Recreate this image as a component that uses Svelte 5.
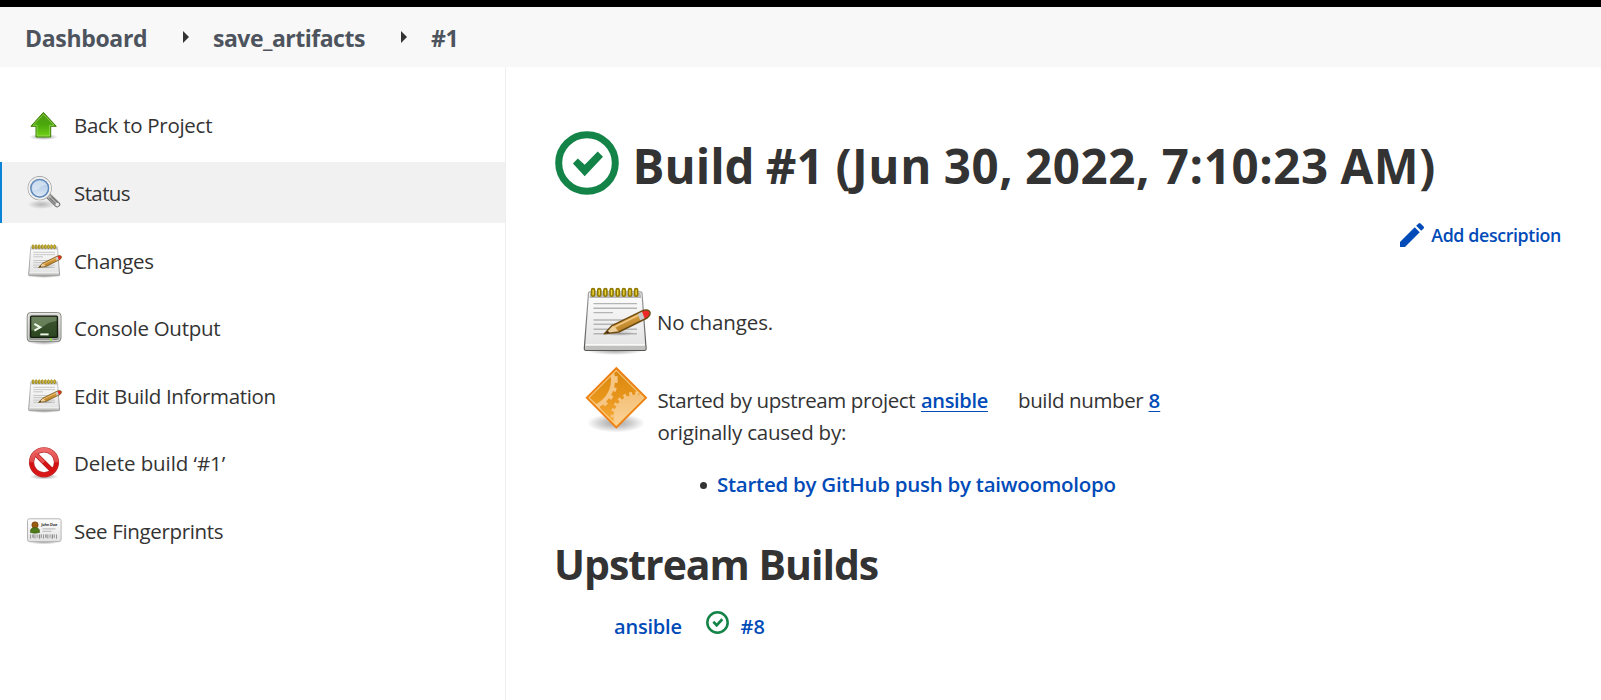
<script>
  const tasks = [
    { label: 'Back to Project', icon: 'up', tracking: -0.28 },
    { label: 'Status', icon: 'search', tracking: -0.6 },
    { label: 'Changes', icon: 'notepad', tracking: -0.3 },
    { label: 'Console Output', icon: 'terminal', tracking: -0.28 },
    { label: 'Edit Build Information', icon: 'notepad', tracking: -0.35 },
    { label: 'Delete build ‘#1’', icon: 'stop', tracking: -0.08 },
    { label: 'See Fingerprints', icon: 'card', tracking: -0.34 }
  ];
  const current = 'Status';
  const rings = [0, 1, 2, 3, 4, 5, 6, 7];
  const bars = [0, 1, 2, 3, 4, 5, 6, 7, 8, 9, 10, 11, 12];
</script>

<svg class="defs" width="0" height="0" aria-hidden="true">
  <defs>
    <radialGradient id="shade"><stop offset="0" stop-color="#000" stop-opacity=".36" /><stop offset=".5" stop-color="#000" stop-opacity=".2" /><stop offset="1" stop-color="#000" stop-opacity="0" /></radialGradient>
    <linearGradient id="green" x1="0" y1="0" x2="0" y2="1"><stop offset="0" stop-color="#4f9a12" /><stop offset=".5" stop-color="#4aa80c" /><stop offset="1" stop-color="#73d216" /></linearGradient>
    <linearGradient id="glass" x1="0" y1="0" x2="0" y2="1"><stop offset="0" stop-color="#a9c4e4" /><stop offset=".6" stop-color="#c6d9ee" /><stop offset="1" stop-color="#e6f0fa" /></linearGradient>
    <linearGradient id="paper" x1="0" y1="0" x2="0" y2="1"><stop offset="0" stop-color="#fdfdfd" /><stop offset="1" stop-color="#e2e2e2" /></linearGradient>
    <linearGradient id="edge" x1="0" y1="0" x2="0" y2="1"><stop offset="0" stop-color="#a0a0a0" /><stop offset="1" stop-color="#555753" /></linearGradient>
    <linearGradient id="wood" x1="0" y1="0" x2=".4" y2="1"><stop offset="0" stop-color="#eab65c" /><stop offset=".5" stop-color="#d39a3c" /><stop offset="1" stop-color="#b07a22" /></linearGradient>
    <linearGradient id="case" x1="0" y1="0" x2="0" y2="1"><stop offset="0" stop-color="#dcdcd8" /><stop offset="1" stop-color="#93958f" /></linearGradient>
    <linearGradient id="screen" x1="0" y1="0" x2="0" y2="1"><stop offset="0" stop-color="#3f5633" /><stop offset="1" stop-color="#2c4720" /></linearGradient>
    <linearGradient id="red" x1="0" y1="0" x2="0" y2="1"><stop offset="0" stop-color="#ee6b6b" /><stop offset=".48" stop-color="#e24444" /><stop offset=".52" stop-color="#d01010" /><stop offset="1" stop-color="#dc1717" /></linearGradient>
    <linearGradient id="amber" x1="0" y1="0" x2="0" y2="1"><stop offset="0" stop-color="#d9860c" /><stop offset=".5" stop-color="#e8951c" /><stop offset="1" stop-color="#fbb03c" /></linearGradient>
    <linearGradient id="cream" x1="0" y1="0" x2="0" y2="1"><stop offset="0" stop-color="#f3c078" /><stop offset="1" stop-color="#ffdba4" /></linearGradient>
    <clipPath id="diamond"><path d="M30.3 4.6 57.6 31.7 30.3 59 3 31.7Z" /></clipPath>
  </defs>
</svg>

{#snippet notepad()}
  <ellipse cx="32" cy="63.5" rx="29" ry="4.5" fill="url(#shade)" />
  <path d="M7 4.8H57.4Q58.8 4.8 59 6.2L63.1 61.5Q63.2 63.4 61.4 63.4H3Q1.2 63.4 1.3 61.5L5.5 6.2Q5.6 4.8 7 4.8Z" fill="url(#paper)" stroke="url(#edge)" stroke-width="1.2" />
  <path d="M7 6H57.6L58.2 11H6.5Z" fill="#b9b9b9" />
  <path d="M2.4 58.6H62L62.3 62.4H2.1Z" fill="#c0c0be" />
  <path d="M2.6 57.8H61.8" stroke="#fff" stroke-width="1.2" />
  {#each rings as r}
    <rect x={8.6 + r * 6.15} y="1.6" width="3" height="7.6" rx="1.5" fill="#f0d840" stroke="#8f7902" stroke-width="1.6" />
  {/each}
  <path d="M10.5 16.6H54M10.5 21.3H54M10.5 25.6H30M10.5 33H44M10.5 37.3H34M10.5 42.3H54M10.5 46.7H54" stroke="#b4b4b4" stroke-width="1.4" />
  <ellipse cx="36" cy="46" rx="16" ry="3.5" fill="url(#shade)" opacity=".5" />
  <path d="M21.2 46.9 29 38.6 58.2 24.3Q63.6 21.9 66.4 24.2 68.6 27.3 64.1 31L35.8 45Z" fill="url(#wood)" />
  <path d="M21.2 46.9 29 38.6 32 40 35.8 45Z" fill="#edcf9b" />
  <path d="M30.5 40.5 56 27.8" stroke="#f3cd88" stroke-width="1.4" />
  <path d="M54.6 26.4 59 24.2 62 32 57.6 34.2Z" fill="#c9c9c9" />
  <path d="M59 24.2Q64 22.3 66 24.4 67.9 27.3 64 30.8L61.9 31.9Z" fill="#ef2929" />
  <path d="M21.2 46.9 24 43.8 27 45.6Z" fill="#222" />
  <path d="M21.2 46.9 29 38.6 58.2 24.3Q63.6 21.9 66.4 24.2 68.6 27.3 64.1 31L35.8 45Z" fill="none" stroke="#6d4b12" stroke-width="1.4" stroke-linejoin="round" />
{/snippet}

{#snippet taskIcon(name)}
  {#if name === 'notepad'}
    <svg class="pad-small" viewBox="0 0 70 68">{@render notepad()}</svg>
  {:else}
    <svg class="task-svg" viewBox="0 0 36 36">
      {#if name === 'up'}
        <ellipse cx="17.5" cy="30" rx="14.5" ry="3.2" fill="url(#shade)" />
        <path d="M17.4 5.4 30.3 19.3H24.7V30H10V19.3H4.9Z" fill="url(#green)" stroke="#3b7c08" stroke-linejoin="round" />
        <path d="M17.4 7.2 28 18.3H23.6V28.9H11.1V18.3H7.2Z" fill="none" stroke="#a3dd62" stroke-opacity=".65" />
      {:else if name === 'search'}
        <ellipse cx="15.5" cy="30.5" rx="14" ry="4.5" fill="url(#shade)" opacity=".65" />
        <path d="M22.3 21.8 31.2 30.3" stroke="#767676" stroke-width="6" stroke-linecap="round" />
        <path d="M22.3 21.8 31.2 30.3" stroke="#b5b5b2" stroke-width="4" stroke-linecap="round" />
        <path d="M23.5 24 30 30.4M25.5 22.5 32 28.8" stroke="#777" stroke-width="1.1" />
        <circle cx="31.2" cy="30.5" r="1.7" fill="#eee" />
        <circle cx="13.7" cy="14.2" r="10.2" fill="url(#glass)" stroke="#999" stroke-width="3.8" />
        <circle cx="13.7" cy="14.2" r="10.4" fill="none" stroke="#efefed" stroke-width="2.2" />
        <circle cx="13.7" cy="14.2" r="8.9" fill="none" stroke="#5c8ac4" stroke-width="1.3" />
        <path d="M6.3 15A7.6 7.6 0 0 1 20.7 11Q15 11 13 14.5 10 17.5 6.3 15Z" fill="#fff" opacity=".35" />
      {:else if name === 'terminal'}
        <ellipse cx="18" cy="32" rx="16" ry="3" fill="url(#shade)" />
        <rect x="1.2" y="2.6" width="33.8" height="29" rx="3.4" fill="url(#case)" stroke="#85867f" />
        <rect x="2.3" y="3.6" width="31.6" height="27" rx="2.6" fill="none" stroke="#f1f1ee" stroke-opacity=".7" />
        <rect x="4.6" y="6.2" width="26.8" height="21.2" rx="1" fill="url(#screen)" stroke="#151c11" stroke-width="1.3" />
        <path d="M5.4 7H30.6V11Q22 12 18 16 12 20.5 5.4 20.5Z" fill="#b4cba2" opacity=".38" />
        <path d="M8.4 13.8 14.2 17.3 8.4 20.7" fill="none" stroke="#eef7e8" stroke-width="2" />
        <path d="M14.3 24.4H22.6" stroke="#eef7e8" stroke-width="1.9" />
        <rect x="23.8" y="28.3" width="2" height="2.4" fill="#8ae234" />
        <path d="M27.5 29.5H30.5" stroke="#777" />
      {:else if name === 'stop'}
        <ellipse cx="18" cy="31.6" rx="14.5" ry="3" fill="url(#shade)" />
        <circle cx="18" cy="17.3" r="12.5" fill="#fff" stroke="#b93030" stroke-width="5.2" />
        <path d="M9.4 8.8 26.6 26" stroke="#b61b1b" stroke-width="4.6" />
        <circle cx="18" cy="17.3" r="12.5" fill="none" stroke="url(#red)" stroke-width="3.9" />
        <path d="M9 8.4 18 17.4" stroke="#e85050" stroke-width="3.2" />
        <path d="M18 17.4 27 26.4" stroke="#d61313" stroke-width="3.2" />
      {:else}
        <ellipse cx="18" cy="30" rx="16" ry="2.3" fill="url(#shade)" />
        <rect x="1.5" y="6.8" width="33.6" height="22.8" rx="2" fill="url(#paper)" stroke="#b5b5b3" />
        <circle cx="9" cy="13" r="3.2" fill="#9a5b10" stroke="#6d3f08" stroke-width=".6" />
        <path d="M4.5 20.5Q3.8 15.5 8.8 15.8 14.2 15.5 13.5 20.5Q9 22 4.5 20.5Z" fill="#4e7a1c" stroke="#365a10" stroke-width=".6" />
        <text x="15.2" y="13.6" class="card-name">John Doe</text>
        <path d="M16.5 16.8H29.5M16.5 19.3H25.5" stroke="#c2c2c2" stroke-width="1.2" />
        {#each bars as b}
          <rect x={4.2 + b * 2.15} y="22.4" width={b % 3 === 1 ? 1.4 : 0.9} height={b % 2 ? 3.4 : 4.2} fill="#8a8a8a" />
        {/each}
      {/if}
    </svg>
  {/if}
{/snippet}

<div class="page">
  <div class="topbar"></div>
  <nav class="crumbs">
    <a class="c1" href="#dashboard">Dashboard</a>
    <svg class="tri" viewBox="0 0 6 12"><path d="M0 0 6 6 0 12Z" /></svg>
    <a class="c2" href="#job">save_artifacts</a>
    <svg class="tri" viewBox="0 0 6 12"><path d="M0 0 6 6 0 12Z" /></svg>
    <a class="c3" href="#build">#1</a>
  </nav>

  <div class="body">
    <aside>
      {#each tasks as t}
        <a class="task" class:active={t.label === current} href="#task">
          <span class="slot">{@render taskIcon(t.icon)}</span>
          <span class="label" style:letter-spacing="{t.tracking}px">{t.label}</span>
        </a>
      {/each}
    </aside>

    <main>
      <h1>
        <svg class="status-large" viewBox="0 0 64 64">
          <circle cx="32" cy="32" r="28.3" fill="none" stroke="#138347" stroke-width="7" />
          <path d="M17.9 32.6 22.8 27.4 29.7 33.8 42.7 20.4 48 25.7 29.7 45.3Z" fill="#138347" />
        </svg>
        <span><span class="name">Build #1</span> (Jun 30, 2022, 7:10:23 AM)</span>
      </h1>

      <div class="describe">
        <svg viewBox="0 0 18 18"><path d="M0 14.25V18H3.75L14.81 6.94 11.06 3.19ZM17.71 4.04A1 1 0 0 0 17.71 2.63L15.37.29A1 1 0 0 0 13.96.29L12.13 2.12 15.88 5.87Z" /></svg>
        <a href="#describe">Add description</a>
      </div>

      <div class="summary changes">
        <svg class="pad-large" viewBox="0 0 70 68">{@render notepad()}</svg>
        <p>No changes.</p>
      </div>

      <div class="summary cause">
        <svg class="gears" viewBox="0 0 62 68">
          <ellipse cx="30" cy="57" rx="29" ry="9.5" fill="url(#shade)" />
          <path d="M30.3 1.8 60.4 31.7 30.3 61.8.4 31.7Z" fill="url(#amber)" />
          <g clip-path="url(#diamond)">
            <circle cx="-2" cy="14" r="29" fill="none" stroke="#f5c684" stroke-width="4" />
            <circle cx="-2" cy="14" r="32" fill="none" stroke="#f5c684" stroke-width="3.4" stroke-dasharray="4 4.6" stroke-dashoffset="1" />
            <circle cx="50" cy="51" r="22.5" fill="url(#cream)" />
            <circle cx="50" cy="51" r="23.6" fill="none" stroke="#f6c682" stroke-width="3.6" stroke-dasharray="2.9 3.2" />
          </g>
          <path d="M30.3 4.4 57.8 31.7 30.3 59.2 3 31.7Z" fill="none" stroke="#fbd49a" stroke-width="1.2" opacity=".75" />
          <path d="M30.3 1.9 60.2 31.7 30.3 61.6.6 31.7Z" fill="none" stroke="#f07f12" stroke-width="1.6" />
        </svg>
        <div class="cause-text">
          <p class="line">
            <span class="t1">Started by upstream project</span>
            <a class="up" href="#ansible">ansible</a>
            <span class="t2">build number</span>
            <a class="num" href="#8">8</a>
          </p>
          <p class="origin">originally caused by:</p>
          <ul><li><a href="#push">Started by GitHub push by taiwoomolopo</a></li></ul>
        </div>
      </div>

      <h2>Upstream Builds</h2>
      <div class="upstream">
        <a class="job" href="#ansible">ansible</a>
        <svg viewBox="0 0 64 64">
          <circle cx="32" cy="32" r="28.3" fill="none" stroke="#138347" stroke-width="7" />
          <path d="M17.9 32.6 22.8 27.4 29.7 33.8 42.7 20.4 48 25.7 29.7 45.3Z" fill="#138347" />
        </svg>
        <a href="#8">#8</a>
      </div>
    </main>
  </div>
</div>

<style>
  :global(body) { margin: 0; background: #fff; overflow: hidden; }
  .defs { display: block; }
  .page {
    height: 700px;
    display: flex;
    flex-direction: column;
    font-family: 'Open Sans', 'Noto Sans', sans-serif;
    font-size: 20.5px;
    color: #333;
    overflow: hidden;
  }
  .page svg { display: block; flex: none; overflow: visible; }
  a { color: #004bb8; text-decoration: none; font-weight: 600; }
  p, h1, h2, ul { margin: 0; padding: 0; white-space: nowrap; }

  .topbar { height: 7px; background: #000; flex: none; }
  .crumbs {
    height: 60px;
    flex: none;
    box-sizing: border-box;
    background: #f8f8f8;
    display: flex;
    align-items: center;
    padding: 2px 0 0 25px;
  }
  .crumbs a { font-size: 23px; font-weight: 700; color: #4d545d; line-height: 32px; }
  .crumbs .c1 { width: 158px; letter-spacing: -0.32px; }
  .crumbs .c2 { width: 188px; margin-left: 24px; letter-spacing: -0.5px; }
  .crumbs .c3 { margin-left: 24px; letter-spacing: -0.4px; }
  .tri { width: 6px; height: 12px; fill: #333; margin-top: -3px; }

  .body { flex: 1; display: flex; min-height: 0; }
  aside {
    width: 505px;
    flex: none;
    border-right: 1px solid #eee;
    padding-top: 27.4px;
    display: flex;
    flex-direction: column;
    gap: 6.6px;
  }
  .task {
    height: 61px;
    flex: none;
    box-sizing: border-box;
    border-left: 2px solid transparent;
    padding-left: 24px;
    display: flex;
    align-items: center;
    font-weight: 400;
    color: #333;
    line-height: 30px;
    white-space: nowrap;
  }
  .task.active { background: #f1f1f1; border-left-color: #0b84d8; }
  .slot { width: 48px; height: 36px; display: flex; align-items: center; flex: none; }
  .label { padding-top: 1.2px; }
  .task-svg { width: 36px; height: 36px; }
  .pad-small { width: 35px; height: 34px; margin: 1px 0 0 1.5px; }
  .card-name { font: 700 4px 'Open Sans', sans-serif; fill: #333; letter-spacing: -0.25px; }

  main { flex: 1; min-width: 0; padding: 64px 40px 0 49px; }
  h1 { display: flex; align-items: flex-start; height: 64px; font-size: 47.5px; line-height: 70px; font-weight: 700; letter-spacing: 0.58px; word-spacing: -1.2px; }
  .name { letter-spacing: 0; }
  .status-large { width: 64px; height: 64px; margin-right: 13.5px; }

  .describe { display: flex; justify-content: flex-end; align-items: center; height: 26px; margin-top: 27px; font-size: 17.8px; line-height: 26px; letter-spacing: -0.36px; }
  .describe svg { width: 24px; height: 24px; fill: #004bb8; margin-right: 7px; }

  .summary { display: flex; align-items: flex-start; }
  .changes { margin: 39px 0 0 28px; height: 68px; }
  .pad-large { width: 70px; height: 68px; }
  .changes p { margin: 20px 0 0 4px; line-height: 30px; letter-spacing: -0.1px; }

  .cause { margin: 11px 0 0 31px; }
  .gears { width: 62px; height: 68px; }
  .cause-text { margin: 17.5px 0 0 9.5px; line-height: 32px; }
  .line { display: flex; align-items: baseline; height: 32px; }
  .t1 { width: 263.5px; letter-spacing: -0.38px; }
  .line a { text-decoration: underline; text-decoration-thickness: 1px; text-underline-offset: 3px; }
  .up { width: 97px; font-size: 20px; letter-spacing: -0.33px; }
  .t2 { width: 130.5px; letter-spacing: -0.38px; }
  .num { font-size: 20.5px; }
  .origin { letter-spacing: -0.22px; }
  ul { margin: 20px 0 0 59.5px; list-style: none; }
  li { display: flex; align-items: center; letter-spacing: -0.26px; }
  li::before { content: ''; width: 7px; height: 7px; border-radius: 50%; background: #333; margin: 3px 10.5px 0 -17.5px; flex: none; }

  h2 { font-size: 41px; line-height: 56px; font-weight: 700; letter-spacing: -1.02px; margin-top: 36px; margin-left: -1px; }
  .upstream { display: flex; align-items: flex-start; height: 32px; margin: 19px 0 0 59px; line-height: 31px; font-size: 20px; }
  .upstream .job { width: 91.5px; letter-spacing: -0.2px; }
  .upstream svg { width: 23px; height: 23px; margin-right: 12px; }
</style>
